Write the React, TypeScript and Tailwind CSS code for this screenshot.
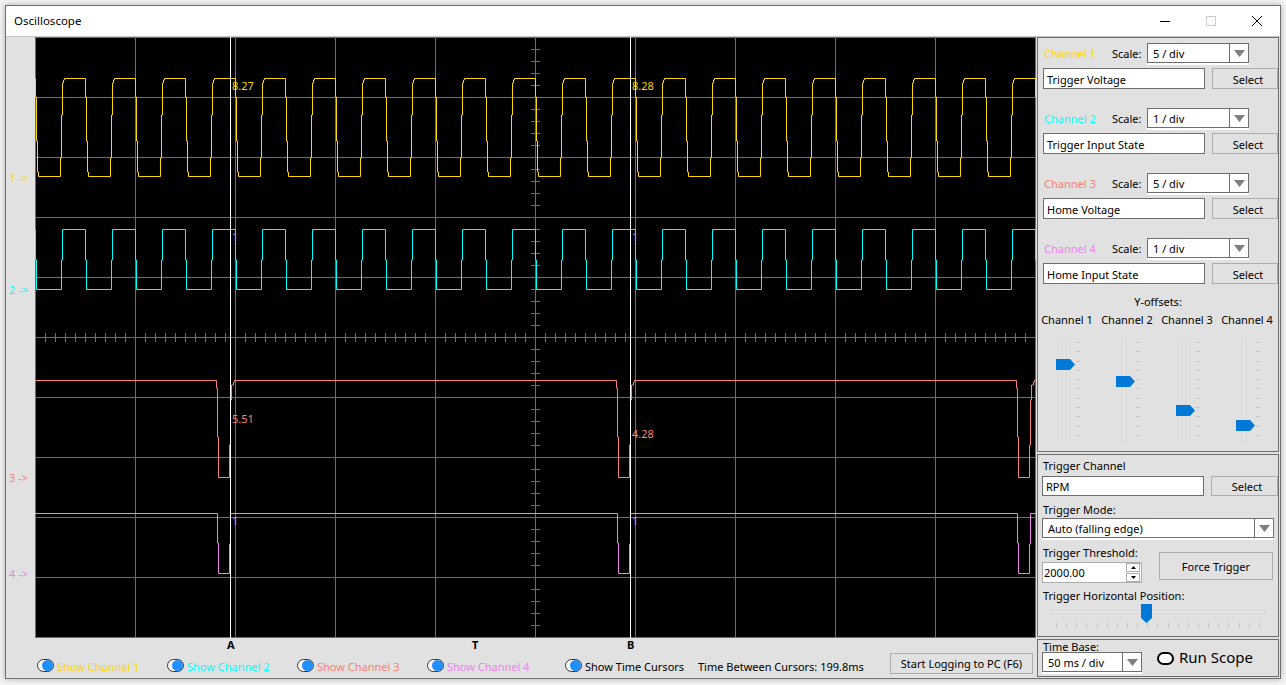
const GRID = "#6e6e6e";
const YELLOW = "#ffd700";
const CYAN = "#00ffff";
const SALMON = "#fa8072";
const VIOLET = "#ee82ee";

function yellowPath() {
  let d = "M35.5 78.5 V97 H36.5 V141 H37.5 V172 H38.5 V176.5 H60.5";
  for (let x = 60; x < 1030; x += 50) {
    d += ` V158 H${x + 1.5} V115 H${x + 2.5} V83 H${x + 3.5} V80 H${x + 4.5} V78.5 H${x + 25.5}`;
    d += ` V97 H${x + 26.5} V141 H${x + 27.5} V172 H${x + 28.5} V176.5 H${x + 50.5}`;
  }
  return d;
}

function cyanPath() {
  let d = "M35.5 229.5 V260 H36.5 V289.5 H61.5";
  for (let x = 61; x < 1030; x += 50) {
    d += ` V260 H${x + 1.5} V229.5 H${x + 24.5} V260 H${x + 25.5} V289.5 H${x + 50.5}`;
  }
  return d;
}

function salmonPath() {
  let d = "M35 380.5";
  for (const x of [216, 616, 1016]) {
    d += ` H${x + 0.5} V388 H${x + 1.5} V437 H${x + 2.5} V477.5 H${x + 13.5} V445 H${x + 14.5} V400 H${x + 15.5} V385 H${x + 17.5} V382 H${x + 18.5} V380.5`;
  }
  return d + " H1036";
}

function violetPath() {
  let d = "M35 513.5";
  for (const x of [216, 616, 1016]) {
    d += ` H${x + 1.5} V543 H${x + 2.5} V573.5 H${x + 13.5} V544 H${x + 14.5} V513.5`;
  }
  return d + " H1036";
}

function ScopeChart() {
  const vertical = [135, 235, 335, 435, 535, 635, 735, 835, 935];
  const horizontal = [97, 157, 217, 277, 337, 397, 457, 517, 577];
  const xTicks = Array.from({ length: 101 }, (_, i) => 35 + i * 10);
  const yTicks = Array.from({ length: 51 }, (_, i) => 37 + i * 12);
  return (
    <svg viewBox="35 37 1001 601" className="block h-[601px] w-[1001px] bg-black">
      <g stroke={GRID} strokeWidth="1">
        {vertical.map((x) => (
          <line key={x} x1={x + 0.5} x2={x + 0.5} y1="37" y2="638" />
        ))}
        {horizontal.map((y) => (
          <line key={y} x1="35" x2="1036" y1={y + 0.5} y2={y + 0.5} />
        ))}
        {xTicks.map((x) => (
          <line key={x} x1={x + 0.5} x2={x + 0.5} y1="333" y2="342" />
        ))}
        {yTicks.map((y) => (
          <line key={y} x1="531" x2="540" y1={y + 0.5} y2={y + 0.5} />
        ))}
        <rect x="35.5" y="37.5" width="1000" height="600" fill="none" />
      </g>
      <g fill="none" strokeWidth="1">
        <path d={yellowPath()} stroke={YELLOW} />
        <path d={cyanPath()} stroke={CYAN} />
        <path d={salmonPath()} stroke={SALMON} />
        <path d={violetPath()} stroke={VIOLET} />
      </g>
      <g stroke="#ffffff" strokeWidth="1">
        <line x1="230.5" x2="230.5" y1="37" y2="638" />
        <line x1="630.5" x2="630.5" y1="37" y2="638" />
      </g>
    </svg>
  );
}

function Combo({ value, className }: { value: string; className: string }) {
  return (
    <div className={`flex h-[20px] items-center border border-[#6e6e6e] bg-white shadow-[0_2px_0_#ffffff] ${className}`}>
      <span className="flex-1 whitespace-nowrap pl-[5px]">{value}</span>
      <span className="flex h-full w-[19px] items-center justify-center border-l border-[#6e6e6e]">
        <svg width="11" height="7" viewBox="0 0 11 7">
          <path d="M0 0H11L5.5 7Z" fill="#7f7f7f" />
        </svg>
      </span>
    </div>
  );
}

function TextBox({ value, className }: { value: string; className: string }) {
  return <div className={`flex items-center border border-[#6e6e6e] bg-white pl-[3px] ${className}`}>{value}</div>;
}

function Btn({ label, className }: { label: string; className: string }) {
  return (
    <div className={`flex items-center justify-center border border-[#adadad] bg-[#e1e1e1] ${className}`}>{label}</div>
  );
}

function ChannelGroup({ name, color, scale, signal }: { name: string; color: string; scale: string; signal: string }) {
  return (
    <div className="flex h-[65px] flex-col">
      <div className="flex h-[20px] items-center">
        <span className="w-[74px] pl-[6px]" style={{ color }}>
          {name}
        </span>
        <span className="w-[35px]">Scale:</span>
        <Combo value={scale} className="w-[102px]" />
      </div>
      <div className="mt-[5px] flex">
        <TextBox value={signal} className="ml-[5px] h-[21px] w-[162px] pt-[1px]" />
        <Btn label="Select" className="ml-[7px] h-[21px] w-[66px] pt-[1px] pl-[6px]" />
      </div>
    </div>
  );
}

function YSlider({ name, top }: { name: string; top: number }) {
  const ticks = Array.from({ length: 11 });
  return (
    <div className="flex w-[60px] flex-col items-center">
      <span className="-translate-x-px whitespace-nowrap">{name}</span>
      <div className="relative mt-[12px] h-[104px] w-[60px]">
        <div className="absolute top-0 bottom-0 left-[24px] w-[4px] border border-[#d6d6d6] bg-[#e7e7e7]" />
        <div className="absolute top-[5px] left-[38px] flex h-[94px] w-[4px] flex-col justify-between">
          {ticks.map((_, i) => (
            <span key={i} className="block h-px w-[4px] bg-[#c4c4c4]" />
          ))}
        </div>
        <svg width="19" height="11" viewBox="0 0 19 11" className="absolute left-[18px]" style={{ top }}>
          <path d="M0 0H14L19 5.5L14 11H0Z" fill="#0078d7" />
        </svg>
      </div>
    </div>
  );
}

function ShowRadio({ label, color, width }: { label: string; color?: string; width: string }) {
  return (
    <div className={`mt-[7px] flex items-center ${width}`}>
      <span className="flex h-[13px] w-[17px] items-center justify-end rounded-full border border-[#333333] bg-white">
        <span className="h-[11px] w-[11px] rounded-full bg-[#1e90ff]" />
      </span>
      <span className="ml-[3px] whitespace-nowrap pt-[1px]" style={{ color }}>
        {label}
      </span>
    </div>
  );
}

export default function App() {
  const channels = [
    { name: "Channel 1", color: YELLOW, scale: "5 / div", signal: "Trigger Voltage" },
    { name: "Channel 2", color: CYAN, scale: "1 / div", signal: "Trigger Input State" },
    { name: "Channel 3", color: SALMON, scale: "5 / div", signal: "Home Voltage" },
    { name: "Channel 4", color: VIOLET, scale: "1 / div", signal: "Home Input State" },
  ];
  const posTicks = Array.from({ length: 21 });

  return (
    <div className="h-[685px] w-[1286px] overflow-hidden bg-[#f4f4f4] pt-[5px] pl-[5px] font-['Noto_Sans',sans-serif] text-[11px] leading-none text-black">
      <div className="flex h-[674px] w-[1276px] flex-col border border-[#707070] bg-[#e1e1e1] shadow-[0_0_6px_rgba(0,0,0,0.3)]">
        {/* title bar */}
        <div className="flex h-[30px] items-center bg-white">
          <span className="ml-[8px] flex-1 text-[11.5px]">Oscilloscope</span>
          <svg width="10" height="1" viewBox="0 0 10 1" className="mr-[35px] -translate-x-[1px]">
            <rect width="10" height="1" fill="#000000" />
          </svg>
          <svg width="10" height="10" viewBox="0 0 10 10" className="mr-[36px]">
            <rect x="0.5" y="0.5" width="9" height="9" fill="none" stroke="#cccccc" />
          </svg>
          <svg width="10" height="10" viewBox="0 0 10 10" className="mr-[18px]">
            <path d="M0 0L10 10M10 0L0 10" stroke="#000000" strokeWidth="1" fill="none" />
          </svg>
        </div>

        <div className="flex flex-1 border-t border-[#c4c4c4]">
          {/* scope side */}
          <div className="flex w-[1031px] flex-col">
            <div className="flex">
              <div className="relative h-[601px] w-[29px]">
                <span className="absolute top-[135px] left-[3px] text-[#ffd700]">1 -&gt;</span>
                <span className="absolute top-[247px] left-[3px] text-[#00ffff]">2 -&gt;</span>
                <span className="absolute top-[435px] left-[3px] text-[#fa8072]">3 -&gt;</span>
                <span className="absolute top-[531px] left-[3px] text-[#ee82ee]">4 -&gt;</span>
              </div>
              <div className="relative h-[601px] w-[1001px]">
                <ScopeChart />
                <span className="absolute top-[43px] left-[197px] text-[#ffd700]">8.27</span>
                <span className="absolute top-[43px] left-[597px] text-[#ffd700]">8.28</span>
                <span className="absolute top-[194px] left-[197px] text-[#9f8cff]">1</span>
                <span className="absolute top-[194px] left-[597px] text-[#9f8cff]">1</span>
                <span className="absolute top-[376px] left-[197px] text-[#fa8072]">5.51</span>
                <span className="absolute top-[391px] left-[597px] text-[#fa8072]">4.28</span>
                <span className="absolute top-[478px] left-[197px] text-[#b98cff]">1</span>
                <span className="absolute top-[478px] left-[597px] text-[#b98cff]">1</span>
              </div>
            </div>
            <div className="relative h-[14px] font-bold">
              <span className="absolute top-[1px] left-[221px]">A</span>
              <span className="absolute top-[1px] left-[466px]">T</span>
              <span className="absolute top-[1px] left-[621px]">B</span>
            </div>
            <div className="flex h-[25px] items-start pl-[31px]">
              <ShowRadio label="Show Channel 1" color={YELLOW} width="w-[130px]" />
              <ShowRadio label="Show Channel 2" color={CYAN} width="w-[130px]" />
              <ShowRadio label="Show Channel 3" color={SALMON} width="w-[130px]" />
              <ShowRadio label="Show Channel 4" color={VIOLET} width="w-[138px]" />
              <ShowRadio label="Show Time Cursors" width="w-[133px]" />
              <span className="mt-[9px] w-[192px] whitespace-nowrap">Time Between Cursors: 199.8ms</span>
              <Btn label="Start Logging to PC (F6)" className="mt-[1px] h-[21px] w-[143px]" />
            </div>
          </div>

          {/* control side */}
          <div className="flex w-[242px] flex-col">
            <div className="h-[415px] border border-[#6e6e6e] pt-[5px]">
              {channels.map((c) => (
                <ChannelGroup key={c.name} {...c} />
              ))}
              <div className="-mt-[7px] text-center">Y-offsets:</div>
              <div className="mt-[7px] flex">
                <YSlider name="Channel 1" top={22} />
                <YSlider name="Channel 2" top={39} />
                <YSlider name="Channel 3" top={68} />
                <YSlider name="Channel 4" top={83} />
              </div>
            </div>

            <div className="mt-[2px] h-[183px] border border-[#6e6e6e] pt-[5px] pl-[4px]">
              <div className="ml-px">Trigger Channel</div>
              <div className="mt-[5px] flex">
                <TextBox value="RPM" className="h-[20px] w-[162px]" />
                <Btn label="Select" className="ml-[7px] h-[20px] w-[67px] pl-[5px]" />
              </div>
              <div className="mt-[8px] ml-px">Trigger Mode:</div>
              <Combo value="Auto (falling edge)" className="mt-[3px] w-[232px]" />
              <div className="mt-[9px] flex">
                <div className="w-[117px]">
                  <div className="ml-px">Trigger Threshold:</div>
                  <div className="mt-[4px] flex h-[21px] w-[100px] items-center border border-[#adadad] bg-white pl-[1px]">
                    <span className="flex-1">2000.00</span>
                    <span className="mr-[1px] flex w-[14px] flex-col gap-px">
                      <span className="flex h-[9px] items-center justify-center border border-[#adadad]">
                        <svg width="5" height="3" viewBox="0 0 5 3">
                          <path d="M0 3H5L2.5 0Z" fill="#000000" />
                        </svg>
                      </span>
                      <span className="flex h-[9px] items-center justify-center border border-[#adadad]">
                        <svg width="5" height="3" viewBox="0 0 5 3">
                          <path d="M0 0H5L2.5 3Z" fill="#000000" />
                        </svg>
                      </span>
                    </span>
                  </div>
                </div>
                <Btn label="Force Trigger" className="mt-[5px] h-[28px] w-[114px]" />
              </div>
              <div className="mt-[7px] ml-px">Trigger Horizontal Position:</div>
              <div className="relative mt-[3px] h-[26px] w-[232px]">
                <div className="absolute top-[6px] left-[9px] h-[4px] w-[215px] border border-[#d6d6d6] bg-[#e7e7e7]" />
                <div className="absolute top-[19px] left-[14px] flex w-[204px] justify-between">
                  {posTicks.map((_, i) => (
                    <span key={i} className="block h-[5px] w-px bg-[#c4c4c4]" />
                  ))}
                </div>
                <svg width="11" height="19" viewBox="0 0 11 19" className="absolute top-0 left-[99px]">
                  <path d="M0 0H11V14L5.5 19L0 14Z" fill="#0078d7" />
                </svg>
              </div>
            </div>

            <div className="mt-[2px] flex h-[38px] border border-[#6e6e6e] pl-[4px]">
              <div className="w-[115px] pt-[1px]">
                <div className="ml-px">Time Base:</div>
                <Combo value="50 ms / div" className="w-[100px]" />
              </div>
              <div className="flex items-start pt-[10px]">
                <span className="mt-[2px] h-[13px] w-[17px] rounded-full border-2 border-black bg-white" />
                <span className="ml-[5px] whitespace-nowrap text-[15px]">Run Scope</span>
              </div>
            </div>
          </div>
        </div>
      </div>
    </div>
  );
}
